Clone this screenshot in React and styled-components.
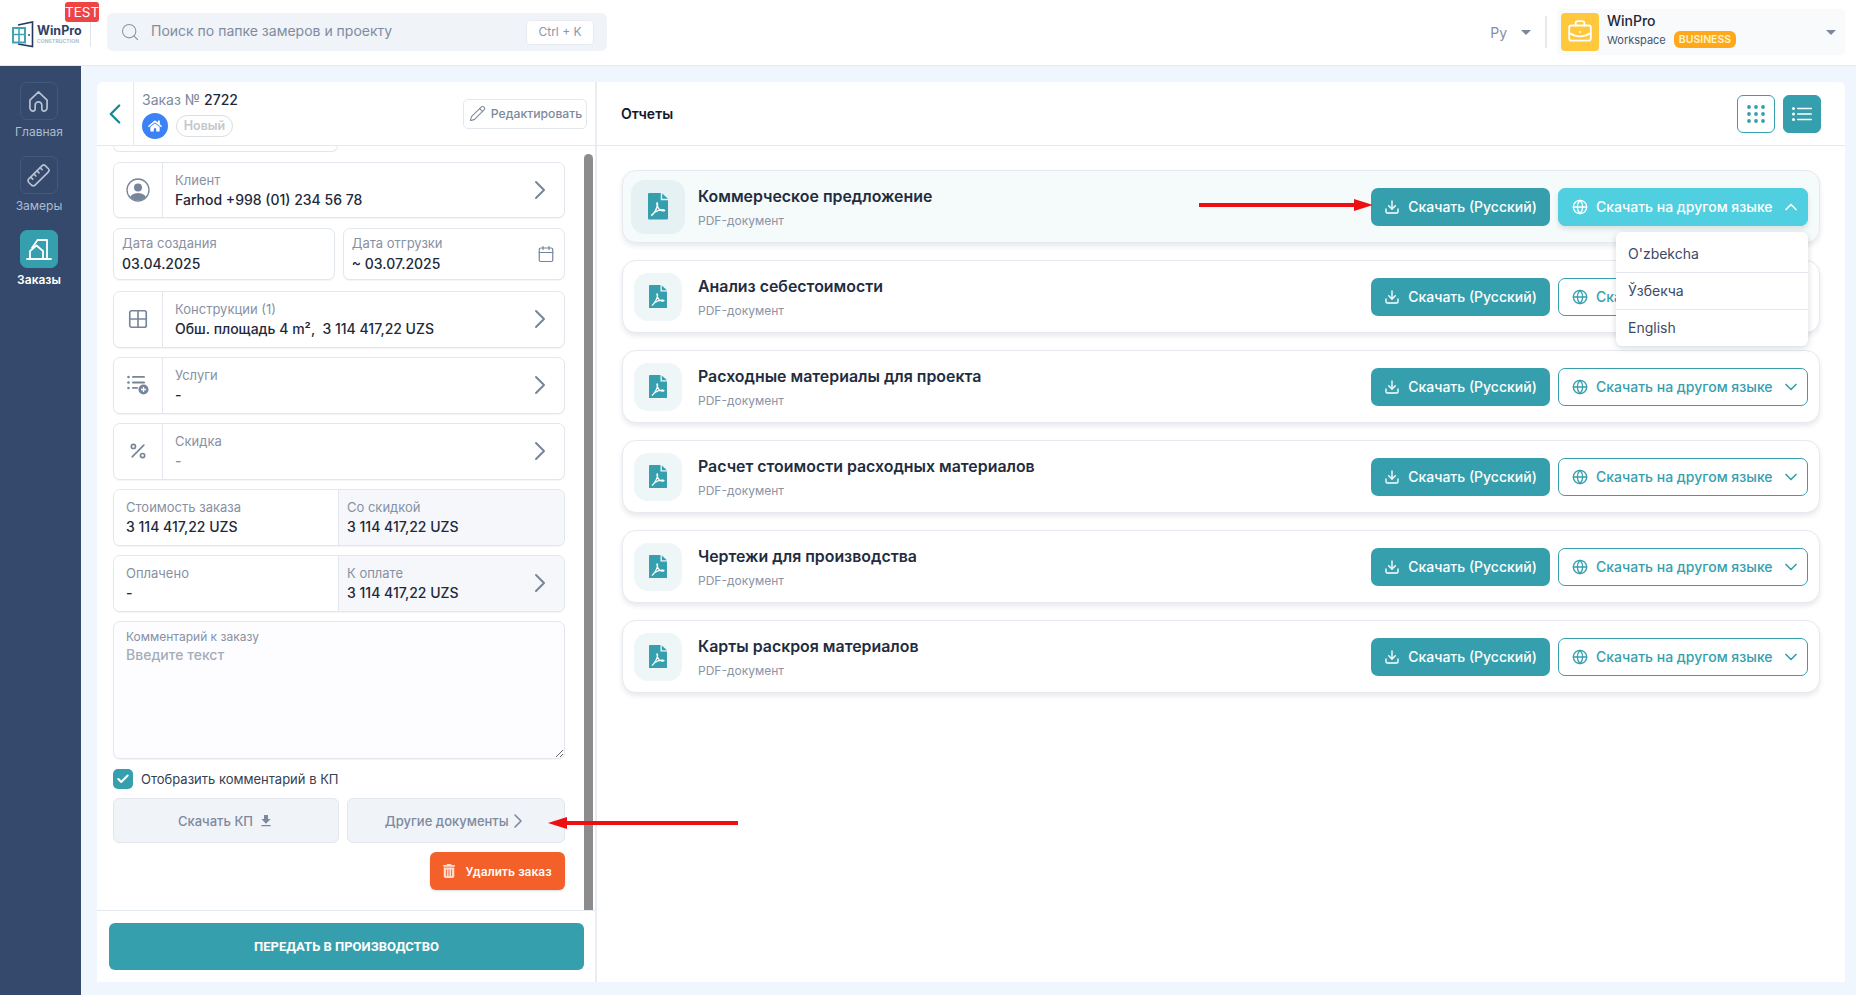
import React from 'react';
import styled, { createGlobalStyle } from 'styled-components';
import {
  BriefcaseBusiness, Calendar, Check, ChevronDown, ChevronLeft, ChevronRight, ChevronUp,
  Download, Globe, Grid2x2, Pencil, Percent, Ruler, Search,
} from 'lucide-react';
import { FaHome } from 'react-icons/fa';
import { FaTrashCan } from 'react-icons/fa6';
import { MdFileDownload } from 'react-icons/md';

const TEAL = '#369fae';

const GlobalStyle = createGlobalStyle`
  * { box-sizing: border-box; }
  html, body { margin: 0; padding: 0; }
  body {
    font-family: Inter, "Noto Sans", sans-serif;
    background: #eff6fd;
    color: #1e293b;
    overflow: hidden;
  }
`;

const Page = styled.div`
  position: relative;
  width: 1856px;
  height: 995px;
  display: flex;
  flex-direction: column;
  overflow: hidden;
`;

/* --- шапка --- */
const Header = styled.header`
  height: 66px;
  flex: none;
  display: flex;
  align-items: center;
  background: #fff;
  border-bottom: 1px solid #e4e9f0;
  padding: 0 11px 1px 12px;
`;

const Brand = styled.div`
  position: relative;
  width: 79px;
  height: 26px;
  margin-right: 16px;
  margin-top: 4px;
  display: flex;
  align-items: center;
  gap: 3px;
  border-right: 1px solid #dfe4ea;
`;

const BrandText = styled.div`
  display: flex;
  flex-direction: column;
`;

const BrandName = styled.span`
  font-size: 12.5px;
  line-height: 14px;
  font-weight: 700;
  color: #2f4264;
`;

const BrandSub = styled.span`
  font-size: 5px;
  line-height: 7px;
  font-weight: 600;
  letter-spacing: 0.1px;
  color: #a9b2c0;
`;

const TestBadge = styled.span`
  position: absolute;
  top: -19px;
  left: 53px;
  width: 34px;
  height: 20px;
  background: #ef4444;
  border-radius: 3px;
  color: #fff;
  font-size: 13.5px;
  line-height: 20px;
  text-align: center;
`;

const SearchBox = styled.div`
  width: 500px;
  height: 38px;
  display: flex;
  align-items: center;
  background: #f0f3f8;
  border-radius: 6px;
  padding: 0 13px;
  color: #8a97aa;
`;

const SearchText = styled.span`
  flex: 1;
  margin: -4px 0 0 11px;
  font-size: 14px;
  color: #7f8ca0;
`;

const Kbd = styled.span`
  width: 68px;
  height: 25px;
  background: #fff;
  border: 1px solid #e8ecf2;
  border-radius: 4px;
  font-size: 12px;
  line-height: 22px;
  text-align: center;
  color: #8a97aa;
`;

const HeaderRight = styled.div`
  margin-left: auto;
  display: flex;
  align-items: center;
`;

const Lang = styled.span`
  font-size: 14px;
  color: #8390a4;
  margin-right: 14px;
`;

const Caret = styled.span`
  width: 0;
  height: 0;
  border-left: 5px solid transparent;
  border-right: 5px solid transparent;
  border-top: 5px solid #7b889c;
`;

const VLine = styled.span`
  width: 2px;
  height: 32px;
  background: #e6eaef;
  margin: 0 10px 0 14px;
`;

const Workspace = styled.div`
  width: 288px;
  height: 46px;
  display: flex;
  align-items: center;
  background: #f8fafc;
  border-radius: 4px;
  padding: 0 9px 0 4px;
`;

const WorkspaceIcon = styled.div`
  width: 38px;
  height: 38px;
  border-radius: 4px;
  background: #ffc83d;
  color: #fff;
  display: flex;
  align-items: center;
  justify-content: center;
`;

const WorkspaceInfo = styled.div`
  margin-left: 8px;
  flex: 1;
`;

const WorkspaceName = styled.div`
  font-size: 14px;
  line-height: 17px;
  font-weight: 500;
  color: #1f2937;
  margin: -4px 0 2px;
`;

const WorkspaceLine = styled.div`
  display: flex;
  align-items: center;
  gap: 8px;
  font-size: 11px;
  color: #47556d;
`;

const PlanBadge = styled.span`
  height: 17px;
  padding: 0 5px;
  border-radius: 6px;
  background: #ffa81c;
  color: #fff3c4;
  font-size: 10.5px;
  font-weight: 600;
  line-height: 17px;
`;

/* --- основная часть --- */
const Body = styled.div`
  flex: 1;
  min-height: 0;
  display: flex;
`;

const Sidebar = styled.nav`
  width: 81px;
  flex: none;
  background: #34496b;
  padding: 16px 3px 0 0;
  display: flex;
  flex-direction: column;
  align-items: center;
  gap: 15px;
`;

const NavItem = styled.div`
  display: flex;
  flex-direction: column;
  align-items: center;
  gap: 3px;
`;

const NavIcon = styled.div`
  width: 38px;
  height: 38px;
  border-radius: 7px;
  display: flex;
  align-items: center;
  justify-content: center;
  color: ${p => (p.$active ? '#fff' : '#b6c1d2')};
  background: ${p => (p.$active ? TEAL : 'transparent')};
  border: 1px solid ${p => (p.$active ? TEAL : '#435a7e')};
`;

const NavLabel = styled.span`
  font-size: 12px;
  line-height: 18px;
  font-weight: ${p => (p.$active ? 600 : 400)};
  color: ${p => (p.$active ? '#fff' : '#aebbcd')};
`;

const FlippedRuler = styled(Ruler)`
  transform: scaleX(-1);
`;

const Main = styled.main`
  flex: 1;
  min-width: 0;
  padding: 16px 11px 13px 16px;
  display: flex;
`;

const Panel = styled.div`
  flex: 1;
  display: flex;
  background: #fff;
  border-radius: 6px 6px 0 0;
  overflow: hidden;
`;

/* --- левая колонка --- */
const OrderColumn = styled.section`
  width: 500px;
  flex: none;
  display: flex;
  flex-direction: column;
  border-right: 2px solid #e8edf3;
`;

const OrderHead = styled.div`
  height: 64px;
  flex: none;
  display: flex;
  align-items: center;
  border-bottom: 1px solid #e4e9f0;
  padding-right: 8px;
`;

const BackButton = styled.div`
  width: 37px;
  height: 100%;
  display: flex;
  align-items: center;
  justify-content: center;
  color: #0f8a96;
  border-right: 1px solid #e4e9f0;
`;

const OrderInfo = styled.div`
  flex: 1;
  padding: 2px 0 0 8px;
`;

const OrderTitle = styled.div`
  font-size: 14px;
  line-height: 18px;
  color: #7d8a9e;
  & b { font-weight: 500; color: #1e293b; }
`;

const OrderStatus = styled.div`
  display: flex;
  align-items: center;
  gap: 8px;
  margin-top: 4px;
`;

const HomeBadge = styled.span`
  width: 26px;
  height: 26px;
  border-radius: 50%;
  background: #3b82f6;
  color: #fff;
  display: flex;
  align-items: center;
  justify-content: center;
`;

const StatusPill = styled.span`
  width: 57px;
  height: 22px;
  border: 1px solid #dcdedf;
  border-radius: 11px;
  text-align: center;
  font-size: 12.5px;
  line-height: 20px;
  font-weight: 600;
  color: #c4c8cc;
`;

const EditButton = styled.button`
  width: 124px;
  height: 30px;
  display: flex;
  align-items: center;
  justify-content: center;
  gap: 5px;
  background: #fff;
  border: 1px solid #e2e7ee;
  border-radius: 5px;
  font-family: inherit;
  font-size: 12.2px;
  font-weight: 500;
  color: #7d8a9e;
  padding: 0 0 0 1px;
  white-space: nowrap;
`;

const OrderScroll = styled.div`
  position: relative;
  flex: 1;
  min-height: 0;
  overflow: hidden;
  padding-left: 16px;
`;

const ScrollThumb = styled.div`
  position: absolute;
  top: 8px;
  bottom: 0;
  left: 487px;
  width: 9px;
  background: #8c8c8c;
  border-radius: 5px 5px 0 0;
`;

const OrderForm = styled.div`
  width: 451.5px;
  display: flex;
  flex-direction: column;
  gap: 9.4px;
`;

const ClippedCard = styled.div`
  width: 225px;
  height: 6.3px;
  border: 1px solid #e2e7ee;
  border-top: none;
  border-radius: 0 0 6px 6px;
`;

const Card = styled.div`
  height: ${p => p.$h || 56.6}px;
  display: flex;
  background: #fff;
  border: 1px solid #e2e7ee;
  border-radius: 7px;
  box-shadow: 0 1px 1px rgba(30, 41, 59, 0.05);
  overflow: hidden;
`;

const CardIcon = styled.div`
  width: 49px;
  flex: none;
  display: flex;
  align-items: center;
  justify-content: center;
  color: #77859a;
  border-right: 1px solid #e2e7ee;
`;

const CardBody = styled.div`
  flex: 1;
  display: flex;
  flex-direction: column;
  justify-content: center;
  padding-top: 1px;
  padding-left: ${p => p.$pad ?? 12}px;
  gap: 1px;
`;

const DateBody = styled(CardBody)`
  padding-top: 0;
  gap: 2px;
`;

const CardArrow = styled.div`
  width: 48px;
  flex: none;
  display: flex;
  align-items: center;
  justify-content: center;
  color: #77859a;
`;

const Label = styled.span`
  font-size: 13px;
  line-height: 17px;
  color: #8791a3;
`;

const Value = styled.span`
  font-size: 14px;
  line-height: 19px;
  font-weight: 450;
  white-space: pre;
  color: ${p => (p.$muted ? '#8791a3' : '#1e293b')};
`;

const DateRow = styled.div`
  display: flex;
  gap: 8px;
  margin-bottom: 2px;
`;

const DateCard = styled(Card)`
  flex: 1;
  align-items: center;
  padding: 0 9px 0 8px;
`;

const SumCell = styled.div`
  width: ${p => (p.$shaded ? 'auto' : '224px')};
  flex: ${p => (p.$shaded ? 1 : 'none')};
  display: flex;
  align-items: center;
  padding-left: ${p => (p.$shaded ? 8 : 12)}px;
  background: ${p => (p.$shaded ? '#f5f7fa' : '#fff')};
  border-left: ${p => (p.$shaded ? '1px solid #e2e7ee' : 'none')};
`;

const CommentBox = styled.div`
  height: 138.3px;
  display: flex;
  flex-direction: column;
  background: #fdfdff;
  border: 1px solid #e2e7ee;
  border-radius: 7px;
  box-shadow: 0 1px 1px rgba(30, 41, 59, 0.05);
  padding-top: 7px;
`;

const CommentLabel = styled.span`
  font-size: 12px;
  line-height: 16px;
  color: #8791a3;
  padding-left: 12px;
`;

const CommentInput = styled.textarea`
  flex: 1;
  border: none;
  outline: none;
  background: transparent;
  padding: 0 0 0 12px;
  font-family: inherit;
  font-size: 14px;
  font-weight: 500;
  line-height: 20px;
  border-radius: 7px;
  &::placeholder { color: #a4acb9; opacity: 1; }
`;

const CheckRow = styled.label`
  display: flex;
  align-items: center;
  gap: 8px;
  font-size: 13px;
  color: #344054;
  height: 20px;
  line-height: 16px;
`;

const CheckMark = styled.span`
  width: 20px;
  height: 20px;
  border-radius: 5px;
  background: ${TEAL};
  color: #fff;
  display: flex;
  align-items: center;
  justify-content: center;
`;

const DocButtons = styled.div`
  display: flex;
  gap: 8px;
`;

const DocButton = styled.button`
  flex: 1;
  height: 45px;
  display: flex;
  align-items: center;
  justify-content: center;
  gap: 5px;
  padding: 0;
  background: #f0f3f8;
  border: 1px solid #e2e7ee;
  border-radius: 6px;
  font-family: inherit;
  font-size: 13px;
  font-weight: 500;
  color: #7d8a9e;
  &:first-child { flex: none; width: 226px; }
  &:last-child { padding-left: 3px; }
  & > svg.lucide { margin-left: -8px; }
`;

const DeleteRow = styled.div`
  display: flex;
  justify-content: flex-end;
`;

const DeleteButton = styled.button`
  width: 135px;
  height: 38px;
  display: flex;
  align-items: center;
  justify-content: center;
  gap: 9px;
  padding: 0;
  border: none;
  border-radius: 6px;
  background: #f4602a;
  box-shadow: 0 1px 2px rgba(0, 0, 0, 0.15);
  color: #fff;
  font-family: Roboto, sans-serif;
  font-size: 12.6px;
  font-weight: 500;
  & svg { color: #ffdcd0; }
`;

const OrderFoot = styled.div`
  height: 72px;
  flex: none;
  border-top: 1px solid #e4e9f0;
  padding: 12px;
`;

const SubmitButton = styled.button`
  width: 475px;
  height: 47px;
  border: none;
  border-radius: 6px;
  background: ${TEAL};
  color: #fff;
  font-family: Roboto, sans-serif;
  font-size: 13px;
  font-weight: 700;
`;

/* --- отчеты --- */
const ReportsColumn = styled.section`
  flex: 1;
  min-width: 0;
  display: flex;
  flex-direction: column;
`;

const ReportsHead = styled.div`
  height: 64px;
  flex: none;
  display: flex;
  align-items: center;
  justify-content: space-between;
  border-bottom: 1px solid #e4e9f0;
  padding: 0 24px;
`;

const ReportsTitle = styled.h2`
  margin: 0;
  font-size: 14px;
  font-weight: 600;
  color: #111827;
`;

const ViewSwitch = styled.div`
  display: flex;
  gap: 8px;
`;

const ViewButton = styled.button`
  width: 38px;
  height: 38px;
  padding: 0;
  display: flex;
  align-items: center;
  justify-content: center;
  border-radius: 6px;
  border: 1px solid ${TEAL};
  background: ${p => (p.$active ? TEAL : '#fff')};
  color: ${p => (p.$active ? '#fff' : TEAL)};
`;

const ReportList = styled.div`
  padding: 24px 25px 0;
  display: flex;
  flex-direction: column;
  gap: 17px;
`;

const ReportCard = styled.div`
  position: relative;
  height: 73px;
  display: flex;
  align-items: center;
  background: ${p => (p.$open ? '#f5fafa' : '#fff')};
  border: 1px solid #e6eaf0;
  border-radius: 14px;
  box-shadow: 0 3px 5px rgba(30, 41, 59, 0.1);
  padding: 0 11px 0 ${p => (p.$open ? 8 : 11)}px;
`;

const FileBadge = styled.div`
  width: ${p => (p.$open ? 54 : 48)}px;
  height: ${p => (p.$open ? 54 : 48)}px;
  flex: none;
  margin-right: ${p => (p.$open ? 13 : 16)}px;
  border-radius: 14px;
  background: ${p => (p.$open ? '#e5f1f3' : '#eef6f8')};
  display: flex;
  align-items: center;
  justify-content: center;
`;

const ReportText = styled.div`
  flex: 1;
  min-width: 0;
  padding-top: 3px;
`;

const ReportName = styled.div`
  font-size: 15.9px;
  line-height: 20px;
  font-weight: 600;
  color: #1f2d3f;
`;

const ReportType = styled.div`
  margin-top: 6px;
  font-size: 12px;
  line-height: 16px;
  color: #8a94a8;
`;

const ReportButtons = styled.div`
  display: flex;
  gap: 8px;
`;

const DownloadButton = styled.button`
  width: 179px;
  height: 38px;
  padding: 0;
  display: flex;
  align-items: center;
  justify-content: center;
  gap: 8px;
  border: none;
  border-radius: 7px;
  background: ${TEAL};
  color: #fff;
  font-family: inherit;
  font-size: 14px;
  font-weight: 500;
`;

const OtherLangButton = styled.button`
  width: 250px;
  height: 38px;
  padding: 0 0 0 13px;
  display: flex;
  align-items: center;
  gap: 8px;
  border-radius: 7px;
  border: 1px solid ${p => (p.$open ? '#4fcfe0' : TEAL)};
  background: ${p => (p.$open ? '#4fcfe0' : '#fff')};
  color: ${p => (p.$open ? '#fff' : TEAL)};
  box-shadow: ${p => (p.$open ? '0 3px 5px rgba(30, 41, 59, 0.12)' : 'none')};
  font-family: inherit;
  font-size: 14px;
  font-weight: 500;
`;

const LangMenu = styled.ul`
  position: absolute;
  z-index: 5;
  top: 61px;
  right: 11px;
  width: 192px;
  margin: 0;
  padding: 0;
  list-style: none;
  background: #fff;
  border-radius: 6px;
  box-shadow: 0 2px 6px rgba(30, 41, 59, 0.18);
`;

const LangItem = styled.li`
  height: 37px;
  padding-left: 12px;
  font-size: 14px;
  line-height: 35px;
  color: #3c4a68;
  &:first-child { height: 40px; line-height: 43px; }
  & + & { border-top: 1px solid #e4e7f0; }
`;

/* красные стрелки поверх скриншота */
const Arrow = styled.svg`
  position: absolute;
  z-index: 10;
  left: ${p => p.$x}px;
  top: ${p => p.$y}px;
`;

const LogoMark = () => (
  <svg width="22" height="27" viewBox="0 0 22 27" fill="none">
    <path d="M6 4 L20.5 1 V25.5 L6 23" stroke="#223a5e" strokeWidth="1.6" />
    <path d="M1 7 H13 V21.5 H1 Z" fill="#fff" stroke="#3fa5b3" strokeWidth="2" />
    <path d="M7 7 V21.5 M1 13.5 H13" stroke="#3fa5b3" strokeWidth="1.6" />
    <circle cx="17" cy="14" r="0.9" fill="#223a5e" />
  </svg>
);

const HomeOutline = () => (
  <svg width="21" height="23" viewBox="0 0 22 24" fill="none" stroke="currentColor" strokeWidth="1.8" strokeLinejoin="round" strokeLinecap="round">
    <path d="M2 10.5 L11 2 L20 10.5 V18.5 A3.5 3.5 0 0 1 16.5 22 A2.5 2.5 0 0 1 14.5 19.5 V16 A3.5 3.5 0 0 0 7.5 16 V19.5 A2.5 2.5 0 0 1 5.5 22 A3.5 3.5 0 0 1 2 18.5 Z" />
  </svg>
);

const ArchIcon = () => (
  <svg width="26" height="26" viewBox="0 0 26 26" fill="none" stroke="currentColor" strokeWidth="1.8" strokeLinejoin="round" strokeLinecap="round">
    <path d="M1 23 H25" />
    <path d="M6 12 L11.5 4 H21 V23" />
    <path d="M4 23 V15 L10.5 9.5 L17 15 V23" />
  </svg>
);

const UserCircle = () => (
  <svg width="24" height="24" viewBox="0 0 24 24" fill="none">
    <defs>
      <clipPath id="userClip"><circle cx="12" cy="12" r="10.5" /></clipPath>
    </defs>
    <circle cx="12" cy="12" r="11" stroke="#77859a" strokeWidth="1.3" />
    <circle cx="12" cy="9.5" r="4" fill="#77859a" />
    <ellipse cx="12" cy="21" rx="8.5" ry="6" fill="#77859a" clipPath="url(#userClip)" />
  </svg>
);

const ServicesIcon = () => (
  <svg width="22" height="20" viewBox="0 0 22 20" fill="#77859a">
    <circle cx="1.5" cy="2" r="1.3" />
    <rect x="5" y="1" width="13" height="1.8" rx="0.9" />
    <circle cx="1.5" cy="7.5" r="1.3" />
    <rect x="5" y="6.6" width="13" height="1.8" rx="0.9" />
    <circle cx="1.5" cy="13" r="1.3" />
    <rect x="5" y="12" width="6" height="1.8" rx="0.9" />
    <circle cx="16.5" cy="14.5" r="5" />
    <path d="M16.5 12 V17 M14 14.5 H19" stroke="#fff" strokeWidth="1.3" />
  </svg>
);

const PdfIcon = ({ size }) => (
  <svg width={size} height={size * 1.33} viewBox="0 0 18 24">
    <path d="M1 0 H11.5 V6.5 H18 V23 A1 1 0 0 1 17 24 H1 A1 1 0 0 1 0 23 V1 A1 1 0 0 1 1 0 Z" fill={TEAL} />
    <path d="M12.8 0.4 L18 5.2 H12.8 Z" fill={TEAL} />
    <path
      d="M3 20.5 C5.5 18.5 7.6 14.5 8.4 11.5 C8.9 9.5 8.4 8.6 8 9 C7.6 9.5 8.4 13 10.5 15 C12 16.3 14.5 16.5 15 15.8 C15.4 15.1 12.5 14.8 9.5 15.6 C7 16.3 4.5 18 3 20.5 Z"
      fill="none"
      stroke="#fff"
      strokeWidth="1.2"
    />
  </svg>
);

const DotsIcon = () => (
  <svg width="18" height="18" viewBox="0 0 18 18" fill="currentColor">
    {[2, 9, 16].flatMap(y => [2, 9, 16].map(x => <circle key={`${x}-${y}`} cx={x} cy={y} r="1.9" />))}
  </svg>
);

const ListIcon = () => (
  <svg width="20" height="14" viewBox="0 0 20 14" fill="currentColor">
    {[1.5, 7, 12.5].map(y => (
      <g key={y}>
        <circle cx="1.5" cy={y} r="1.5" />
        <rect x="5" y={y - 0.8} width="15" height="1.6" rx="0.8" />
      </g>
    ))}
  </svg>
);

const RedArrow = ({ x, y, width, left }) => (
  <Arrow $x={x} $y={y} width={width} height="14" viewBox={`0 0 ${width} 14`}>
    {left ? (
      <>
        <rect x="16" y="5" width={width - 16} height="4" fill="#ee0f12" />
        <path d="M0 7 L19 1 V13 Z" fill="#ee0f12" />
      </>
    ) : (
      <>
        <rect x="0" y="5" width={width - 16} height="4" fill="#ee0f12" />
        <path d={`M${width} 7 L${width - 19} 1 V13 Z`} fill="#ee0f12" />
      </>
    )}
  </Arrow>
);

const reports = [
  'Коммерческое предложение',
  'Анализ себестоимости',
  'Расходные материалы для проекта',
  'Расчет стоимости расходных материалов',
  'Чертежи для производства',
  'Карты раскроя материалов',
];

const nav = [
  { label: 'Главная', icon: <HomeOutline /> },
  { label: 'Замеры', icon: <FlippedRuler size={25} strokeWidth={1.6} /> },
  { label: 'Заказы', icon: <ArchIcon />, active: true },
];

const Arrowhead = () => <ChevronRight size={32} strokeWidth={1.5} />;

const App = () => (
  <Page>
    <GlobalStyle />
    <Header>
      <Brand>
        <LogoMark />
        <BrandText>
          <BrandName>WinPro</BrandName>
          <BrandSub>CONSTRUCTION</BrandSub>
        </BrandText>
        <TestBadge>TEST</TestBadge>
      </Brand>
      <SearchBox>
        <Search size={20} strokeWidth={1.3} />
        <SearchText>Поиск по папке замеров и проекту</SearchText>
        <Kbd>Ctrl + K</Kbd>
      </SearchBox>
      <HeaderRight>
        <Lang>Ру</Lang>
        <Caret />
        <VLine />
        <Workspace>
          <WorkspaceIcon><BriefcaseBusiness size={26} strokeWidth={1.7} /></WorkspaceIcon>
          <WorkspaceInfo>
            <WorkspaceName>WinPro</WorkspaceName>
            <WorkspaceLine>
              Workspace
              <PlanBadge>BUSINESS</PlanBadge>
            </WorkspaceLine>
          </WorkspaceInfo>
          <Caret />
        </Workspace>
      </HeaderRight>
    </Header>

    <Body>
      <Sidebar>
        {nav.map(item => (
          <NavItem key={item.label}>
            <NavIcon $active={item.active}>{item.icon}</NavIcon>
            <NavLabel $active={item.active}>{item.label}</NavLabel>
          </NavItem>
        ))}
      </Sidebar>

      <Main>
        <Panel>
          <OrderColumn>
            <OrderHead>
              <BackButton><ChevronLeft size={34} strokeWidth={1.6} /></BackButton>
              <OrderInfo>
                <OrderTitle>Заказ № <b>2722</b></OrderTitle>
                <OrderStatus>
                  <HomeBadge><FaHome size={14} /></HomeBadge>
                  <StatusPill>Новый</StatusPill>
                </OrderStatus>
              </OrderInfo>
              <EditButton><Pencil size={17} strokeWidth={1.5} />Редактировать</EditButton>
            </OrderHead>

            <OrderScroll>
              <ScrollThumb />
              <OrderForm>
                <ClippedCard />
                <Card>
                  <CardIcon><UserCircle /></CardIcon>
                  <CardBody>
                    <Label>Клиент</Label>
                    <Value>Farhod +998 (01) 234 56 78</Value>
                  </CardBody>
                  <CardArrow><Arrowhead /></CardArrow>
                </Card>
                <DateRow>
                  <DateCard $h={52}>
                    <DateBody $pad={0}>
                      <Label>Дата создания</Label>
                      <Value>03.04.2025</Value>
                    </DateBody>
                  </DateCard>
                  <DateCard $h={52}>
                    <DateBody $pad={0}>
                      <Label>Дата отгрузки</Label>
                      <Value>~ 03.07.2025</Value>
                    </DateBody>
                    <Calendar size={18} strokeWidth={1.6} color="#77859a" />
                  </DateCard>
                </DateRow>
                <Card>
                  <CardIcon><Grid2x2 size={22} strokeWidth={1.8} /></CardIcon>
                  <CardBody>
                    <Label>Конструкции (1)</Label>
                    <Value>Обш. площадь 4 m²,  3 114 417,22 UZS</Value>
                  </CardBody>
                  <CardArrow><Arrowhead /></CardArrow>
                </Card>
                <Card>
                  <CardIcon><ServicesIcon /></CardIcon>
                  <CardBody>
                    <Label>Услуги</Label>
                    <Value>-</Value>
                  </CardBody>
                  <CardArrow><Arrowhead /></CardArrow>
                </Card>
                <Card>
                  <CardIcon><Percent size={20} strokeWidth={2} /></CardIcon>
                  <CardBody>
                    <Label>Скидка</Label>
                    <Value $muted>-</Value>
                  </CardBody>
                  <CardArrow><Arrowhead /></CardArrow>
                </Card>
                <Card>
                  <SumCell>
                    <CardBody $pad={0}>
                      <Label>Стоимость заказа</Label>
                      <Value>3 114 417,22 UZS</Value>
                    </CardBody>
                  </SumCell>
                  <SumCell $shaded>
                    <CardBody $pad={0}>
                      <Label>Со скидкой</Label>
                      <Value>3 114 417,22 UZS</Value>
                    </CardBody>
                  </SumCell>
                </Card>
                <Card>
                  <SumCell>
                    <CardBody $pad={0}>
                      <Label>Оплачено</Label>
                      <Value>-</Value>
                    </CardBody>
                  </SumCell>
                  <SumCell $shaded>
                    <CardBody $pad={0}>
                      <Label>К оплате</Label>
                      <Value>3 114 417,22 UZS</Value>
                    </CardBody>
                    <CardArrow><Arrowhead /></CardArrow>
                  </SumCell>
                </Card>
                <CommentBox>
                  <CommentLabel>Комментарий к заказу</CommentLabel>
                  <CommentInput placeholder="Введите текст" />
                </CommentBox>
                <CheckRow>
                  <CheckMark><Check size={14} strokeWidth={3.5} /></CheckMark>
                  Отобразить комментарий в КП
                </CheckRow>
                <DocButtons>
                  <DocButton>Скачать КП <MdFileDownload size={16} /></DocButton>
                  <DocButton>Другие документы <ChevronRight size={24} strokeWidth={1.6} /></DocButton>
                </DocButtons>
                <DeleteRow>
                  <DeleteButton><FaTrashCan size={14} />Удалить заказ</DeleteButton>
                </DeleteRow>
              </OrderForm>
            </OrderScroll>

            <OrderFoot>
              <SubmitButton>ПЕРЕДАТЬ В ПРОИЗВОДСТВО</SubmitButton>
            </OrderFoot>
          </OrderColumn>

          <ReportsColumn>
            <ReportsHead>
              <ReportsTitle>Отчеты</ReportsTitle>
              <ViewSwitch>
                <ViewButton><DotsIcon /></ViewButton>
                <ViewButton $active><ListIcon /></ViewButton>
              </ViewSwitch>
            </ReportsHead>
            <ReportList>
              {reports.map((name, i) => (
                <ReportCard key={name} $open={i === 0}>
                  <FileBadge $open={i === 0}><PdfIcon size={i === 0 ? 20 : 18} /></FileBadge>
                  <ReportText>
                    <ReportName>{name}</ReportName>
                    <ReportType>PDF-документ</ReportType>
                  </ReportText>
                  <ReportButtons>
                    <DownloadButton><Download size={16} strokeWidth={2} />Скачать (Русский)</DownloadButton>
                    <OtherLangButton $open={i === 0}>
                      <Globe size={16} strokeWidth={2} />
                      <span>Скачать на другом языке</span>
                      {i === 0 ? <ChevronUp size={20} /> : <ChevronDown size={20} />}
                    </OtherLangButton>
                  </ReportButtons>
                  {i === 0 && (
                    <LangMenu>
                      <LangItem>O'zbekcha</LangItem>
                      <LangItem>Ўзбекча</LangItem>
                      <LangItem>English</LangItem>
                    </LangMenu>
                  )}
                </ReportCard>
              ))}
            </ReportList>
          </ReportsColumn>
        </Panel>
      </Main>
    </Body>

    <RedArrow x={1199} y={198} width={174} />
    <RedArrow x={548} y={816} width={190} left />
  </Page>
);

export default App;
